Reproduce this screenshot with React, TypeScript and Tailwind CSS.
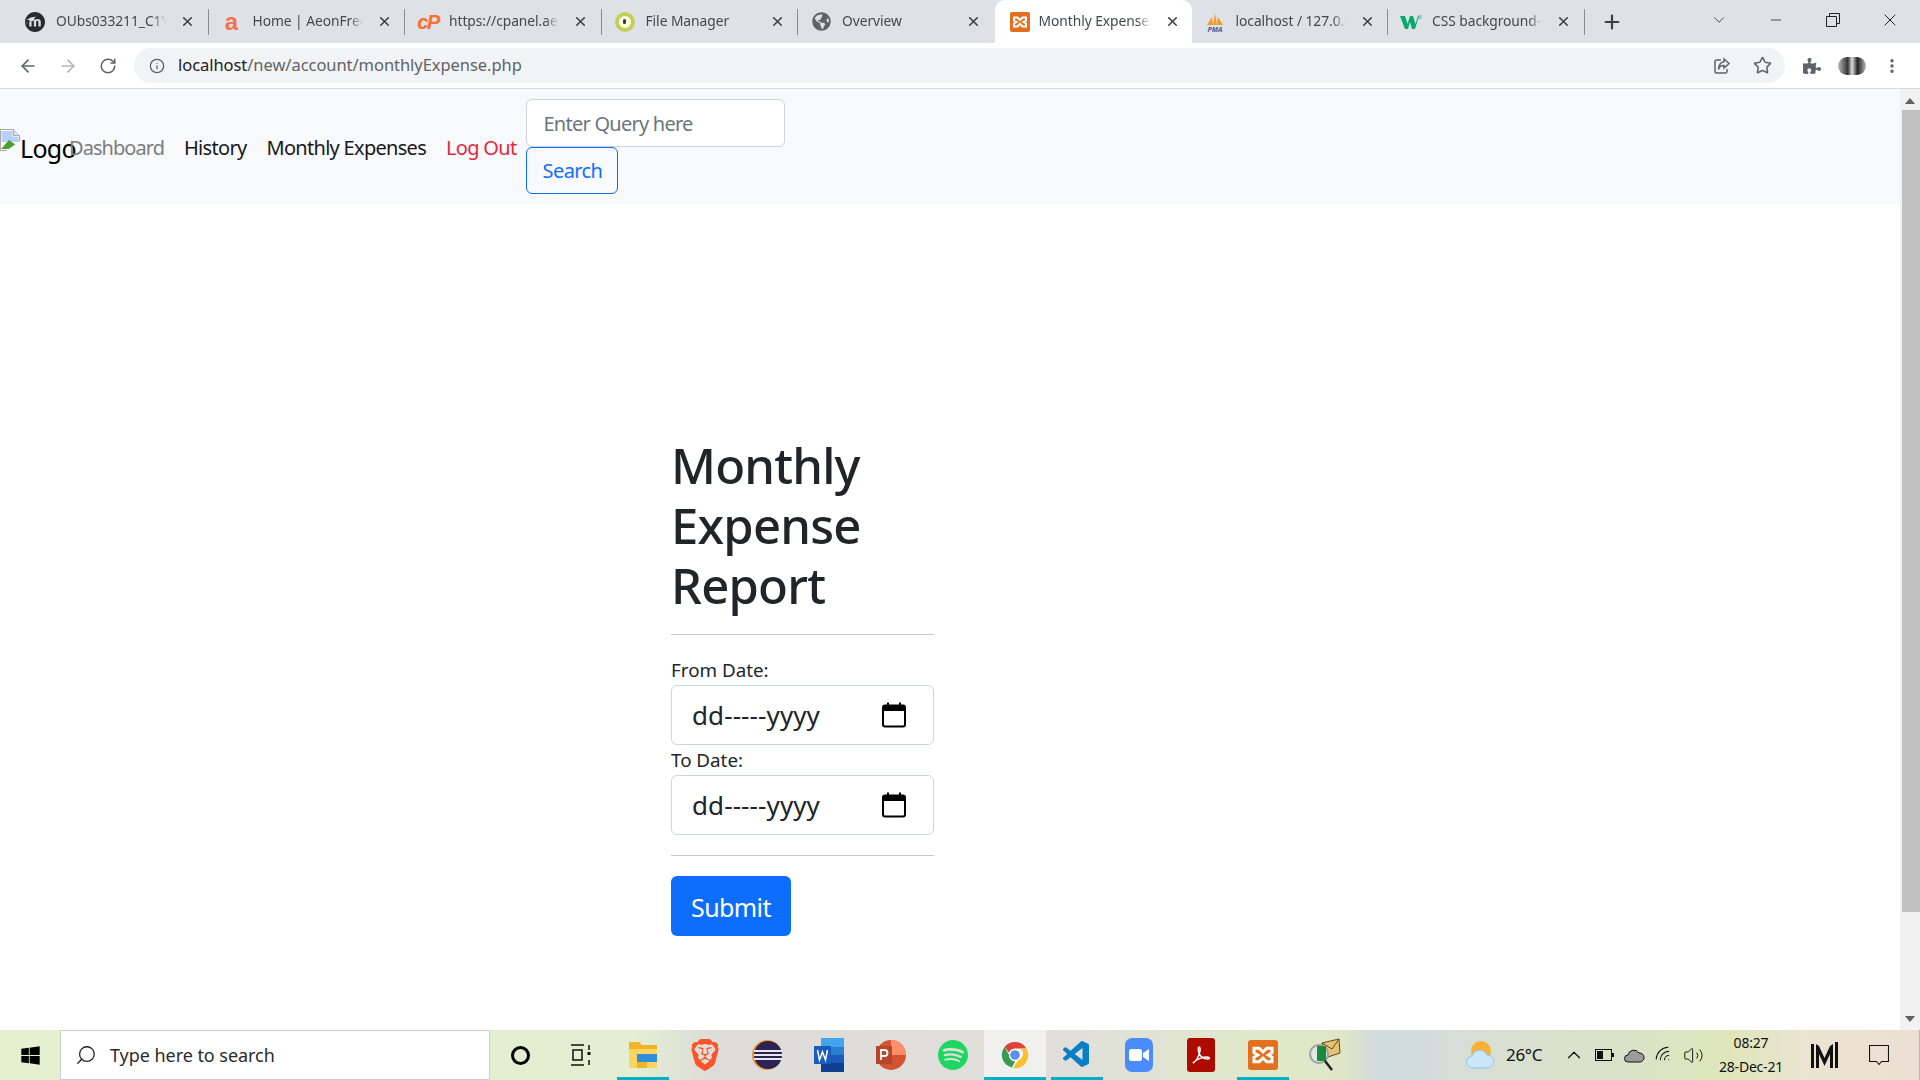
import type { ReactNode } from 'react'
import {
  ArrowLeft,
  ArrowRight,
  ChevronDown,
  ChevronUp,
  Info,
  Minus,
  MoreVertical,
  Plus,
  RotateCw,
  Search,
  Star,
  Volume2,
  Wifi,
  X,
} from 'lucide-react'
import { FaGlobeAmericas, FaPuzzlePiece, FaWindows } from 'react-icons/fa'
import { SiMoodle, SiSpotify, SiBrave } from 'react-icons/si'
import { VscVscode } from 'react-icons/vsc'

const XamppIcon = ({ size = 20 }: { size?: number }) => (
  <svg width={size} height={size} viewBox="0 0 20 20">
    <rect width="20" height="20" rx="2" fill="#e2701f" />
    <path
      d="M4 5.5h3.5L10 8l2.5-2.5H16v3l-2.5 1.5L16 11.5v3h-3.5L10 12l-2.5 2.5H4v-3L6.5 10 4 8.5z"
      fill="none"
      stroke="#fff"
      strokeWidth="2"
    />
  </svg>
)

const ChromeIcon = () => (
  <svg width="28" height="34" viewBox="0 0 28 28">
    <path d="M14 1a13 13 0 0 1 11.3 6.5H14a6.500 6.500 0 0 0-6 4L3.600 6A13 13 0 0 1 14 1z" fill="#db4437" />
    <path d="M3.600 6 8 13.800a6.500 6.500 0 0 0 6 6.700L10.800 26.600A13 13 0 0 1 3.600 6z" fill="#3a9a4f" />
    <path d="M25.300 7.500A13 13 0 0 1 12 27l5.500-8A6.500 6.500 0 0 0 19.500 7.500z" fill="#fbc02d" />
    <circle cx="14" cy="14" r="6" fill="#fff" />
    <circle cx="14" cy="14" r="4.800" fill="#5c8fe8" />
  </svg>
)

const EclipseIcon = () => (
  <svg width="30" height="34" viewBox="0 0 30 34">
    <circle cx="15" cy="17" r="15" fill="#f0932b" />
    <circle cx="16" cy="17" r="14" fill="#2c2255" />
    <g fill="#e8e8f0">
      <rect x="2" y="12" width="28" height="2" />
      <rect x="2" y="16" width="28" height="2" />
      <rect x="2" y="20" width="28" height="2" />
    </g>
  </svg>
)

const WordIcon = () => (
  <svg width="30" height="34" viewBox="0 0 30 34">
    <rect x="7" width="23" height="9" fill="#41a5ee" />
    <rect x="7" y="9" width="23" height="8" fill="#2b7cd3" />
    <rect x="7" y="17" width="23" height="8" fill="#185abd" />
    <rect x="7" y="25" width="23" height="9" fill="#103f91" />
    <rect y="8" width="17" height="18" fill="#1a5cbc" />
    <path d="M3.500 12l2 10 3-8 3 8 2-10" fill="none" stroke="#fff" strokeWidth="1.500" />
  </svg>
)

const PowerPointIcon = () => (
  <svg width="30" height="34" viewBox="0 0 30 34">
    <circle cx="15" cy="17" r="15" fill="#d35230" />
    <path d="M15 2a15 15 0 0 1 15 15H15z" fill="#ff8f6b" />
    <rect y="8" width="16" height="18" fill="#b7472a" />
    <path d="M5 22V12h3.500a3 3 0 0 1 0 6H5" fill="none" stroke="#fff" strokeWidth="1.800" />
  </svg>
)

const AcrobatIcon = () => (
  <div className="flex h-[34px] w-[28px] items-center justify-center rounded-[3px] bg-[#ad0b00]">
    <svg width="22" height="24" viewBox="0 0 22 24">
      <path
        d="M3 20c3-1 6-7 7-12 .4-2 0-4-1-4s-1 3 0 6c1 3 4 6 9 6 2 0 2-2-1-2-4 0-10 2-13 5-1 1-1 1-1 1z"
        fill="none"
        stroke="#fff"
        strokeWidth="1.500"
      />
    </svg>
  </div>
)

const ZoomIcon = () => (
  <div className="flex h-[34px] w-[28px] items-center justify-center rounded-[7px] bg-[#4a8cff]">
    <svg width="20" height="14" viewBox="0 0 20 14">
      <rect y="1" width="13" height="12" rx="2.500" fill="#fff" />
      <path d="M14 5l6-4v12l-6-4z" fill="#fff" />
    </svg>
  </div>
)

const FolderIcon = () => (
  <svg width="28" height="30" viewBox="0 0 28 30">
    <path d="M0 2h10l3 3h15v23H0z" fill="#f0b429" />
    <rect y="9" width="28" height="19" fill="#fcd462" />
    <rect x="8" y="14" width="20" height="8" fill="#2f8fdc" />
    <rect x="8" y="22" width="10" height="6" fill="#f0b429" />
  </svg>
)

const MailScopeIcon = () => (
  <svg width="32" height="34" viewBox="0 0 32 34">
    <path d="M13 5 30 1l1 14-15 5z" fill="#e8c374" stroke="#5a4b20" />
    <path d="M13 5l10 6 7-10" fill="none" stroke="#5a4b20" />
    <circle cx="10" cy="16" r="9" fill="#dfe8e4" stroke="#9aa09d" strokeWidth="2" />
    <rect x="8" y="8" width="9" height="15" fill="#1c8a3c" />
    <path d="m16 23 7 9" stroke="#222" strokeWidth="2.500" />
  </svg>
)

const PmaIcon = () => (
  <svg width="20" height="20" viewBox="0 0 20 20">
    <path d="M2 13 7 5l1 8zM8 13l2-12 2 12zM12 13l1-8 5 8z" fill="#f29b2e" />
    <text x="10" y="19.500" textAnchor="middle" fontSize="7" fontWeight="700" fontStyle="italic" fill="#3e5c95">
      PMA
    </text>
  </svg>
)

const W3Icon = () => (
  <svg width="22" height="18" viewBox="0 0 22 18">
    <path d="M0 3h5l2.500 8L10 3h3l2.500 8L18 3h1l-4 13h-3L10 9l-2 7H5z" fill="#04aa6d" />
    <text x="18" y="6" fontSize="6" fill="#04aa6d">
      3
    </text>
  </svg>
)

const CalendarIcon = () => (
  <svg width="24" height="26" viewBox="0 0 24 26">
    <rect x="1" y="3.500" width="22" height="21" rx="2" fill="none" stroke="#000" strokeWidth="2" />
    <rect x="1" y="3" width="22" height="6" fill="#000" />
    <rect x="5" y="0.500" width="2" height="4" fill="#000" />
    <rect x="17" y="0.500" width="2" height="4" fill="#000" />
  </svg>
)

const BrokenImage = () => (
  <svg width="20" height="22" viewBox="0 0 20 22" className="-mt-[3px] shrink-0">
    <path d="M.5.500h13l6 6v15H.5z" fill="#fff" stroke="#a8a8a8" />
    <path d="M13.500.500v6h6" fill="#e4e4e4" stroke="#a8a8a8" />
    <path d="M1.500 2h11v5.500h6V13h-17z" fill="#b9cff5" />
    <path d="M1 20 9 11l7 5-4 4z" fill="#4f9f32" />
    <path d="M20 12 6 22h14z" fill="#f8f9fa" />
  </svg>
)

const tabs: { title: string; icon: ReactNode; active?: boolean; noDivider?: boolean }[] = [
  { title: 'OUbs033211_C1Y', icon: <SiMoodle size={20} className="text-[#2b2b2b]" /> },
  {
    title: 'Home | AeonFree',
    icon: <span className="font-['Liberation_Sans'] text-[24px] leading-none font-bold text-[#f4724e]">a</span>,
  },
  {
    title: 'https://cpanel.aeonfree',
    icon: <span className="font-['Liberation_Sans'] text-[20px] leading-none font-bold tracking-[-1.5px] text-[#ff6c2c] italic">cP</span>,
  },
  {
    title: 'File Manager',
    icon: (
      <div className="flex h-[20px] w-[20px] items-center justify-center rounded-full border-[4px] border-[#c3cf5a] bg-[#fffbe0]">
        <div className="h-[5px] w-[3px] rounded-full bg-[#333]" />
      </div>
    ),
  },
  { title: 'Overview', icon: <FaGlobeAmericas size={19} className="text-[#5f6368]" />, noDivider: true },
  { title: 'Monthly Expenses', icon: <XamppIcon />, active: true, noDivider: true },
  { title: 'localhost / 127.0.0.1', icon: <PmaIcon /> },
  { title: 'CSS background-image', icon: <W3Icon /> },
]

const Tab = ({ title, icon, active, noDivider }: { title: string; icon: ReactNode; active?: boolean; noDivider?: boolean }) => (
  <div
    className={
      active
        ? 'flex h-full w-[197px] shrink-0 items-center rounded-t-[10px] bg-white pl-[14px]'
        : 'flex h-full w-[196.500px] shrink-0 items-center pl-[12px]'
    }
  >
    <div className="flex w-[22px] shrink-0 justify-center">{icon}</div>
    <div
      className={
        active
          ? 'mb-[1px] ml-[8px] w-[112px] overflow-hidden text-[13.800px] tracking-[-0.05px] whitespace-nowrap text-[#45484d] [mask-image:linear-gradient(to_right,black_88%,transparent)]'
          : 'mb-[1px] ml-[10px] w-[110px] overflow-hidden text-[13.800px] tracking-[-0.05px] whitespace-nowrap text-[#45484d] [mask-image:linear-gradient(to_right,black_88%,transparent)]'
      }
    >
      {title}
    </div>
    <X size={15} strokeWidth={2.6} className="ml-[14px] shrink-0 text-[#3f4145]" />
    {noDivider ? null : <div className="ml-auto h-[26px] w-px bg-[#8b8d91]" />}
  </div>
)

const TaskIcon = ({ children, running, active }: { children: ReactNode; running?: boolean; active?: boolean }) => (
  <div className={active ? 'relative flex h-full w-[62px] items-center justify-center bg-[#f0f0ee]' : 'relative flex h-full w-[62px] items-center justify-center'}>
    {children}
    {running ? <div className={active ? 'absolute right-0 bottom-0 left-0 h-[3px] bg-[#00b0c4]' : 'absolute right-[5px] bottom-0 left-[5px] h-[3px] bg-[#00b0c4]'} /> : null}
  </div>
)

const DateField = ({ label }: { label: string }) => (
  <div>
    <label className="block pt-[1px] text-[18.800px] leading-[29px] text-[#212529]">{label}</label>
    <div className="flex h-[60px] items-center justify-between rounded-[6px] border border-[#ced4da] bg-white pr-[27px] pl-[20px]">
      <span className="text-[26px] tracking-[0.1px] text-[#212529]">dd-----yyyy</span>
      <CalendarIcon />
    </div>
  </div>
)

const App = () => {
  return (
    <div className="flex h-screen w-full flex-col overflow-hidden bg-white font-['Noto_Sans','Open_Sans',sans-serif] text-[#212529]">
      <div className="flex h-[43px] shrink-0 items-center bg-[#dee1e6] pl-[12px]">
        {tabs.map((tab) => (
          <Tab key={tab.title} {...tab} />
        ))}
        <Plus size={22} strokeWidth={2.4} className="ml-[16px] text-[#3c4043]" />
        <ChevronDown size={18} strokeWidth={1.2} className="mb-[4px] ml-[87px] text-[#3c4043]" />
        <Minus size={16} strokeWidth={1.2} className="mb-[4px] ml-[40px] text-[#222]" />
        <svg width="14" height="14" viewBox="0 0 14 14" className="mb-[4px] ml-[42px]">
          <path d="M3.500 3V.500h10v10H11M.500 3.500h10v10H.500z" fill="none" stroke="#222" />
        </svg>
        <X size={20} strokeWidth={1.2} className="mb-[4px] ml-[40px] text-[#222]" />
      </div>

      <div className="flex h-[46px] shrink-0 items-center border-b border-[#d8d9db] bg-white">
        <ArrowLeft size={20} className="ml-[18px] text-[#5f6368]" />
        <ArrowRight size={20} className="ml-[20px] text-[#b4b6b9]" />
        <RotateCw size={18} className="ml-[21px] text-[#5f6368]" />
        <div className="ml-[17px] flex h-[35px] w-[1651px] items-center rounded-full bg-[#f1f3f4]">
          <Info size={16} className="ml-[15px] text-[#5f6368]" />
          <span className="ml-[13px] text-[16.500px] tracking-[-0.05px] text-[#5f6368]">
            <span className="text-[#202124]">localhost</span>/new/account/monthlyExpense.php
          </span>
          <svg width="18" height="18" viewBox="0 0 18 18" className="mr-[22px] ml-auto" fill="none" stroke="#5f6368" strokeWidth="1.500">
            <path d="M8 3H3.500A1.500 1.500 0 0 0 2 4.500v10A1.500 1.500 0 0 0 3.500 16h9a1.500 1.500 0 0 0 1.500-1.500V12" />
            <path d="M11 2l5 4.500-5 4.500V8.500C8 8.500 6 10 5.500 12.500 5.500 8 8 5 11 4.800z" />
          </svg>
          <Star size={19} className="mr-[13px] text-[#5f6368]" />
        </div>
        <FaPuzzlePiece size={18} className="ml-[18px] text-[#5f6368]" />
        <div className="ml-[17px] h-[18px] w-[28px] rounded-[9px] bg-[linear-gradient(90deg,#bbb_0%,#333_35%,#ddd_50%,#222_70%,#bbb_100%)]" />
        <MoreVertical size={18} strokeWidth={2.6} className="ml-[17px] text-[#5f6368]" />
      </div>

      <div className="flex min-h-0 flex-1">
        <div className="min-w-0 flex-1">
          <nav className="flex h-[115px] items-center bg-[#f8f9fa]">
            <div className="flex w-[59px] shrink-0 items-start text-[25px] leading-none whitespace-nowrap text-black">
              <BrokenImage />
              <span className="mt-[4px] tracking-[-0.7px]">Logo</span>
            </div>
            <a className="mt-[2px] px-[10px] text-[20px] tracking-[-0.95px] text-[#7b7d7f]">Dashboard</a>
            <a className="mt-[2px] px-[10px] text-[20px] tracking-[-0.7px] text-[#16181b]">History</a>
            <a className="mt-[2px] px-[10px] text-[20px] tracking-[-0.7px] text-[#16181b]">Monthly Expenses</a>
            <a className="mt-[2px] px-[10px] text-[20px] tracking-[-0.7px] text-[#e0293f]">Log Out</a>
            <div className="flex flex-col items-start">
              <input
                placeholder="Enter Query here"
                className="h-[48px] w-[259px] rounded-[6px] border border-[#ced4da] bg-white px-[16px] text-[20px] tracking-[-0.75px] outline-none placeholder:text-[#6c757d]"
              />
              <button className="h-[47px] w-[92px] rounded-[6px] border border-[#0d6efd] text-[20px] tracking-[-0.6px] text-[#0d6efd]">
                Search
              </button>
            </div>
          </nav>

          <main className="ml-[671px] w-[263px] pt-[231px]">
            <h1 className="text-[49px] leading-[60px] font-medium tracking-[-0.8px] text-[#212529]">Monthly Expense Report</h1>
            <hr className="mt-[19px] border-[#c8c9cb]" />
            <div className="mt-[20px] flex flex-col">
              <DateField label="From Date:" />
              <DateField label="To Date:" />
            </div>
            <hr className="mt-[20px] border-[#c8c9cb]" />
            <button className="mt-[20px] h-[60px] w-[120px] rounded-[6px] bg-[#0d6efd] pt-[3px] text-[25px] tracking-[-0.6px] text-white">
              Submit
            </button>
          </main>
        </div>

        <div className="flex w-[20px] shrink-0 flex-col items-center bg-[#f1f1f1] pt-[9px] pb-[8px]">
          <div className="h-0 w-0 border-x-[5px] border-b-[6px] border-x-transparent border-b-[#606060]" />
          <div className="mt-[6px] ml-[2px] h-[802px] w-[18px] bg-[#c1c1c1]" />
          <div className="mt-auto h-0 w-0 border-x-[5px] border-t-[6px] border-x-transparent border-t-[#606060]" />
        </div>
      </div>

      <div className="flex h-[50px] shrink-0 items-center bg-[linear-gradient(90deg,#e4f0d0_0%,#e3eed2_33%,#dedcd8_37%,#e0dfdc_55%,#e1e8c9_66%,#e0e5c8_70%,#d0dbe0_72%,#d8dfd2_78%,#d9e2c8_84%,#dfe6bb_90%,#ebe4d0_94%,#ecdfd3_100%)]">
        <div className="flex w-[60px] shrink-0 justify-center">
          <FaWindows size={21} className="text-black" />
        </div>
        <div className="flex h-full w-[430px] shrink-0 items-center border border-[#cfcfcf] bg-white">
          <Search size={22} strokeWidth={1.4} className="ml-[14px] -scale-x-100 text-[#222]" />
          <span className="ml-[13px] text-[18px] tracking-[-0.05px] text-[#2b2b2b]">Type here to search</span>
        </div>
        <div className="flex w-[60px] shrink-0 justify-center">
          <div className="h-[19px] w-[19px] rounded-full border-[3px] border-black" />
        </div>
        <div className="flex w-[62px] shrink-0 justify-center">
          <svg width="22" height="22" viewBox="0 0 22 22" fill="none" stroke="#111" strokeWidth="1.500">
            <path d="M1 1h13M1 21h13M3 6h9v10H3zM19 1v5M19 16v5" />
            <rect x="17.500" y="8" width="3" height="3" fill="#111" stroke="none" />
          </svg>
        </div>
        <TaskIcon running><FolderIcon /></TaskIcon>
        <TaskIcon><SiBrave size={32} className="text-[#fb542b]" /></TaskIcon>
        <TaskIcon><EclipseIcon /></TaskIcon>
        <TaskIcon><WordIcon /></TaskIcon>
        <TaskIcon><PowerPointIcon /></TaskIcon>
        <TaskIcon><SiSpotify size={30} className="text-[#1ed760]" /></TaskIcon>
        <TaskIcon running active><ChromeIcon /></TaskIcon>
        <TaskIcon running><VscVscode size={32} className="text-[#0a7fc7]" /></TaskIcon>
        <TaskIcon><ZoomIcon /></TaskIcon>
        <TaskIcon><AcrobatIcon /></TaskIcon>
        <TaskIcon running><XamppIcon size={30} /></TaskIcon>
        <TaskIcon><MailScopeIcon /></TaskIcon>

        <div className="ml-auto flex h-full items-center text-[#111]">
          <svg width="28" height="30" viewBox="0 0 28 30" className="mr-[6px]">
            <circle cx="15" cy="11" r="10" fill="#f9b233" />
            <path d="M7 28a6 6 0 0 1-1-12 8 8 0 0 1 15-1 6.500 6.500 0 0 1 1 13z" fill="#cbe6fa" stroke="#8cc4ec" />
          </svg>
          <span className="w-[58px] pl-[6px] text-[17px] tracking-[-0.3px]">26°C</span>
          <div className="flex w-[32px] justify-center"><ChevronUp size={22} strokeWidth={1.3} /></div>
          <div className="flex w-[28px] justify-center">
            <svg width="19" height="12" viewBox="0 0 19 12">
              <rect x="0.500" y="0.500" width="16" height="11" fill="none" stroke="#111" />
              <rect x="2" y="2" width="6" height="8" fill="#111" />
              <rect x="17" y="4" width="2" height="4" fill="#111" />
            </svg>
          </div>
          <div className="flex w-[32px] justify-center">
            <svg width="21" height="15" viewBox="0 0 21 15">
              <path d="M4 14a3.500 3.500 0 0 1 0-7 6 6 0 0 1 11-2 4.500 4.500 0 0 1 1 9z" fill="#9b9b9b" stroke="#111" />
            </svg>
          </div>
          <div className="flex w-[28px] justify-center"><Wifi size={20} strokeWidth={1.3} className="-rotate-45" /></div>
          <div className="flex w-[30px] justify-center"><Volume2 size={21} strokeWidth={1.1} /></div>
          <div className="flex w-[86px] flex-col items-center text-[14px] leading-[24px] tracking-[-0.2px]">
            <span>08:27</span>
            <span>28-Dec-21</span>
          </div>
          <div className="flex w-[60px] justify-center">
            <svg width="27" height="26" viewBox="0 0 27 26" fill="#111">
              <path d="M0 2h3v24H0zM5 2l3 2v22H5zM8 4l5.500 12L19 4v8l-5.500 12L8 12zM19 4l3-2v24h-3zM24 0h3v26h-3z" />
            </svg>
          </div>
          <div className="flex w-[50px] justify-center">
            <svg width="20" height="21" viewBox="0 0 20 21" fill="none" stroke="#111" strokeWidth="1.100">
              <path d="M.5.500h19v16h-7l-2.500 3-2.500-3h-7z" />
            </svg>
          </div>
          <div className="h-full w-[16px] border-r border-[#b8b8b0]" />
        </div>
      </div>
    </div>
  )
}

export default App
